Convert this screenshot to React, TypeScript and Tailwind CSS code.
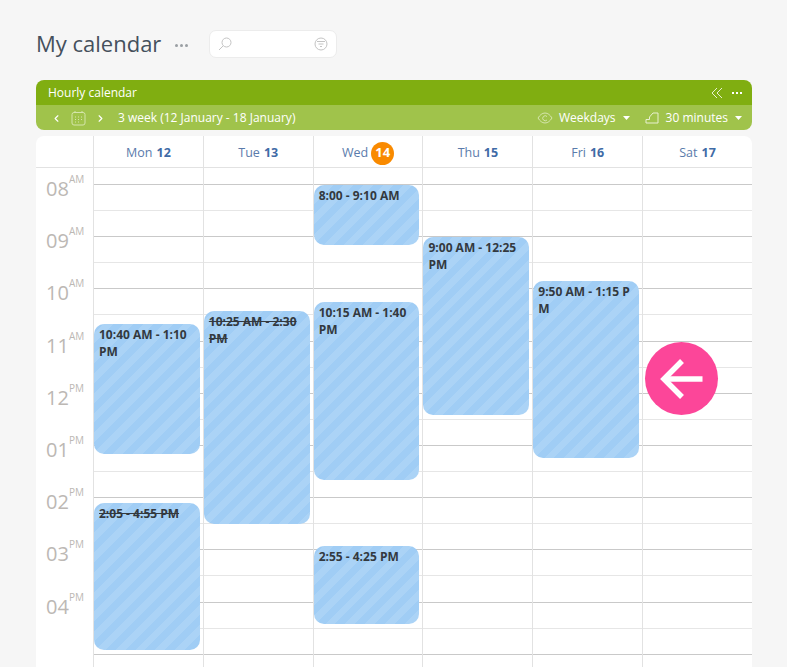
import { ChevronLeft, ChevronRight } from "lucide-react";

type Booking = { top: number; height: number; label: string; struck?: boolean };

type Day = { name: string; date: number; today?: boolean; bookings: Booking[] };

const DAYS: Day[] = [
  {
    name: "Mon",
    date: 12,
    bookings: [
      { top: 156, height: 130, label: "10:40 AM - 1:10 PM" },
      { top: 335, height: 147, label: "2:05 - 4:55 PM", struck: true },
    ],
  },
  {
    name: "Tue",
    date: 13,
    bookings: [{ top: 143, height: 213, label: "10:25 AM - 2:30 PM", struck: true }],
  },
  {
    name: "Wed",
    date: 14,
    today: true,
    bookings: [
      { top: 17, height: 60, label: "8:00 - 9:10 AM" },
      { top: 134, height: 178, label: "10:15 AM - 1:40 PM" },
      { top: 378, height: 78, label: "2:55 - 4:25 PM" },
    ],
  },
  {
    name: "Thu",
    date: 15,
    bookings: [{ top: 69, height: 178, label: "9:00 AM - 12:25 PM" }],
  },
  {
    name: "Fri",
    date: 16,
    bookings: [{ top: 113, height: 177, label: "9:50 AM - 1:15 P M" }],
  },
  { name: "Sat", date: 17, bookings: [] },
];

const HOURS = [
  ["08", "AM"],
  ["09", "AM"],
  ["10", "AM"],
  ["11", "AM"],
  ["12", "PM"],
  ["01", "PM"],
  ["02", "PM"],
  ["03", "PM"],
  ["04", "PM"],
];

const STRIPES =
  "bg-[repeating-linear-gradient(135deg,#a0cdf5_0px,#a0cdf5_7px,#abd3f6_7px,#abd3f6_14px)]";

function SlotLines() {
  return (
    <div className="flex flex-col">
      <div className="h-[17px] border-b border-[#c9c9c9]" />
      {Array.from({ length: 19 }).map((_, i) => (
        <div
          key={i}
          className={`h-[26.1px] border-b ${i % 2 === 0 ? "border-[#e6e6e6]" : "border-[#c9c9c9]"}`}
        />
      ))}
    </div>
  );
}

function DayColumn({ day }: { day: Day }) {
  return (
    <div className="relative flex-1 border-l border-[#e2e2e2]">
      <SlotLines />
      {day.bookings.map((b) => (
        <div
          key={b.label}
          className={`absolute left-0 right-[3px] rounded-[10px] px-[5px] pt-[2px] text-[12px] leading-[17px] font-bold text-[#33393f] [overflow-wrap:anywhere] ${STRIPES}`}
          style={{ top: b.top, height: b.height }}
        >
          <span className={b.struck ? "line-through" : ""}>{b.label}</span>
        </div>
      ))}
    </div>
  );
}

function Caret() {
  return (
    <svg className="ml-[7px]" width="7" height="4" viewBox="0 0 7 4" fill="white">
      <path d="M0 0h7L3.5 4Z" />
    </svg>
  );
}

export default function App() {
  return (
    <div className="h-[667px] overflow-hidden bg-[#f6f6f6] pl-[36px] pr-[35px] font-['Open_Sans','Noto_Sans',sans-serif]">
      <div className="flex h-[80px] items-start pt-[30px]">
        <h1 className="mt-[-1px] w-[126px] text-[22px] leading-[28px] whitespace-nowrap text-[#45505c]">
          My calendar
        </h1>
        <div className="ml-[13px] mt-[14px] flex gap-[2px]">
          <span className="h-[3px] w-[3px] rounded-full bg-[#9a9fa3]" />
          <span className="h-[3px] w-[3px] rounded-full bg-[#9a9fa3]" />
          <span className="h-[3px] w-[3px] rounded-full bg-[#9a9fa3]" />
        </div>
        <div className="ml-[21px] flex h-[28px] w-[128px] items-center justify-between rounded-[7px] border border-[#ececec] bg-white px-[8px]">
          <svg width="14" height="14" viewBox="0 0 14 14" fill="none" stroke="#c4c4c4" strokeWidth="1">
            <circle cx="8.5" cy="5.5" r="4.5" />
            <path d="M5.2 8.8 1 13" />
          </svg>
          <svg width="14" height="14" viewBox="0 0 14 14" fill="none" stroke="#c4c4c4" strokeWidth="1">
            <circle cx="7" cy="7" r="6" />
            <path d="M3 4.5h8M4.5 7h5M6 9.5h2" />
          </svg>
        </div>
      </div>

      <div className="flex h-[25px] items-center justify-between rounded-t-[8px] bg-[#80ae11] pl-[12px] pr-[10px] pt-[1px] text-[12px] text-white">
        <span>Hourly calendar</span>
        <div className="flex items-center gap-[9px]">
          <svg width="12" height="12" viewBox="0 0 12 12" fill="none" stroke="#e8f0d0" strokeWidth="1">
            <path d="M6 1 1 6l5 5M11 1 6 6l5 5" />
          </svg>
          <div className="flex gap-[2px]">
            <span className="h-[2px] w-[2px] bg-white" />
            <span className="h-[2px] w-[2px] bg-white" />
            <span className="h-[2px] w-[2px] bg-white" />
          </div>
        </div>
      </div>
      <div className="flex h-[25px] items-center justify-between rounded-b-[8px] bg-[#a0c34b] pl-[15px] pr-[10px] pt-[1px] text-[12px] text-white">
        <div className="flex items-center">
          <ChevronLeft size={11} strokeWidth={2.5} />
          <svg className="ml-[9px]" width="15" height="16" viewBox="0 0 15 16" fill="none" stroke="#d5e5ac" strokeWidth="1">
            <rect x="1" y="2.5" width="13" height="12.5" rx="2" />
            <path d="M4 1v2M11 1v2" />
            <path d="M4 7h1M7 7h1M10 7h1M4 9.5h1M7 9.5h1M10 9.5h1M4 12h1M7 12h1" />
          </svg>
          <ChevronRight className="ml-[9px]" size={11} strokeWidth={2.5} />
          <span className="ml-[12px]">3 week (12 January - 18 January)</span>
        </div>
        <div className="flex items-center">
          <svg width="16" height="12" viewBox="0 0 16 12" fill="none" stroke="#d5e5ac" strokeWidth="1">
            <path d="M1 6c2-3 4-5 7-5s5 2 7 5c-2 3-4 5-7 5S3 9 1 6Z" />
            <path d="M10 4.5A2.5 2.5 0 1 0 10 8" />
          </svg>
          <span className="ml-[6px]">Weekdays</span>
          <Caret />
          <svg className="ml-[15px]" width="14" height="12" viewBox="0 0 14 12" fill="none" stroke="#e8f0d0" strokeWidth="1">
            <path d="M1 11V7.5h3.5V5L8 1h5v10Z" />
          </svg>
          <span className="ml-[7px]">30 minutes</span>
          <Caret />
        </div>
      </div>

      <div className="relative mt-[6px] h-[560px] rounded-t-[8px] bg-white">
        <div className="flex h-[32px] border-b border-[#e2e2e2] pl-[57px]">
          {DAYS.map((day) => (
            <div
              key={day.name}
              className="flex flex-1 items-center justify-center border-l border-[#e2e2e2] pt-[3px] text-[12.5px] text-[#5a7bab]"
            >
              <span>{day.name}</span>
              {day.today ? (
                <span className="ml-[3px] flex h-[23px] w-[23px] items-center justify-center rounded-full bg-[#f98a00] text-[13px] font-bold text-white">
                  {day.date}
                </span>
              ) : (
                <span className="ml-[4px] font-bold text-[#3f6ba6]">{day.date}</span>
              )}
            </div>
          ))}
        </div>
        <div className="flex">
          <div className="w-[57px] pt-[4px]">
            {HOURS.map(([h, m]) => (
              <div key={h + m} className="flex h-[52.2px] pl-[10px] text-[#bcb8b4]">
                <span className="mt-[3px] text-[20px] leading-[28px]">{h}</span>
                <span className="text-[10px] leading-[14px]">{m}</span>
              </div>
            ))}
          </div>
          {DAYS.map((day) => (
            <DayColumn key={day.name} day={day} />
          ))}
        </div>
        <div className="absolute left-[609px] top-[206px] flex h-[73px] w-[73px] items-center justify-center rounded-full bg-[#fc4699]">
          <svg width="44" height="42" viewBox="0 0 44 42" fill="none" stroke="white" strokeWidth="5.5">
            <path d="M22 3 4 21l18 18" />
            <path d="M4 21h38.5" />
          </svg>
        </div>
      </div>
    </div>
  );
}
